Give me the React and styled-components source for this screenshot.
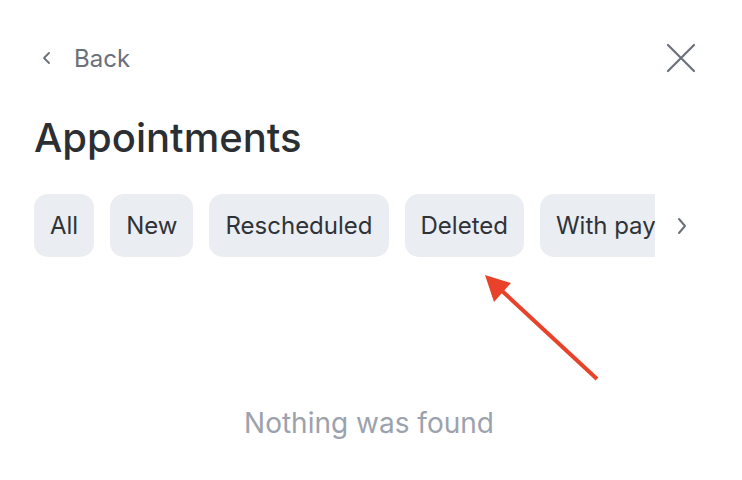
import styled, { createGlobalStyle } from 'styled-components';

const GlobalStyle = createGlobalStyle`
  html, body {
    margin: 0;
    padding: 0;
    background: #ffffff;
    font-family: Inter, "Noto Sans", sans-serif;
  }
`;

const Page = styled.div`
  position: relative;
  width: 742px;
  height: 480px;
  overflow: hidden;
  display: flex;
  flex-direction: column;
`;

const TopBar = styled.div`
  display: flex;
  align-items: center;
  justify-content: space-between;
  height: 46px;
  margin-top: 35px;
  padding: 0 46px 0 40px;
`;

const BackButton = styled.button`
  display: flex;
  align-items: center;
  gap: 20px;
  border: none;
  background: none;
  padding: 0;
  font-family: inherit;
  font-size: 24px;
  color: #6b7079;
  cursor: pointer;
`;

const CloseButton = styled.button`
  display: flex;
  border: none;
  background: none;
  padding: 0;
  cursor: pointer;
`;

const Title = styled.h1`
  margin: 34px 0 0 34px;
  font-size: 40px;
  font-weight: 500;
  line-height: 46px;
  color: #2b2f34;
`;

const FilterRow = styled.div`
  display: flex;
  align-items: center;
  margin: 33px 0 0 34px;
`;

const ChipScroller = styled.div`
  display: flex;
  gap: 16px;
  width: 621px;
  overflow: hidden;
  flex-shrink: 0;
`;

const Chip = styled.button`
  flex-shrink: 0;
  height: 63px;
  padding: 0 16px;
  border: none;
  border-radius: 14px;
  background: #eaedf2;
  font-family: inherit;
  font-size: 24px;
  color: #2f3338;
  cursor: pointer;
`;

const NextButton = styled.button`
  display: flex;
  border: none;
  background: none;
  padding: 0;
  margin-left: 17px;
  cursor: pointer;
`;

const Empty = styled.div`
  margin-top: 149px;
  text-align: center;
  font-size: 28px;
  color: #9ca2ad;
  padding-right: 4px;
`;

const Annotation = styled.svg`
  position: absolute;
  left: 0;
  top: 0;
  pointer-events: none;
`;

const filters = ['All', 'New', 'Rescheduled', 'Deleted', 'With payment'];

function App() {
  return (
    <Page>
      <GlobalStyle />
      <TopBar>
        <BackButton>
          <svg width="14" height="14" viewBox="0 0 14 14">
            <path d="M9 2 L4 7 L9 12" fill="none" stroke="#6b7079" strokeWidth="1.8" strokeLinecap="round" strokeLinejoin="round" />
          </svg>
          Back
        </BackButton>
        <CloseButton>
          <svg width="30" height="30" viewBox="0 0 30 30">
            <path d="M2 2 L28 28 M28 2 L2 28" fill="none" stroke="#6b7079" strokeWidth="2.2" strokeLinecap="round" />
          </svg>
        </CloseButton>
      </TopBar>
      <Title>Appointments</Title>
      <FilterRow>
        <ChipScroller>
          {filters.map((f) => (
            <Chip key={f}>{f}</Chip>
          ))}
        </ChipScroller>
        <NextButton>
          <svg width="20" height="20" viewBox="0 0 20 20">
            <path d="M7 3 L13 10 L7 17" fill="none" stroke="#6b7079" strokeWidth="2" strokeLinecap="round" strokeLinejoin="round" />
          </svg>
        </NextButton>
      </FilterRow>
      <Empty>Nothing was found</Empty>
      <Annotation width="742" height="480">
        <line x1="597" y1="379" x2="500" y2="289" stroke="#e8432a" strokeWidth="4" />
        <polygon points="485,275 511,283 494,302" fill="#e8432a" />
      </Annotation>
    </Page>
  );
}

export default App;
